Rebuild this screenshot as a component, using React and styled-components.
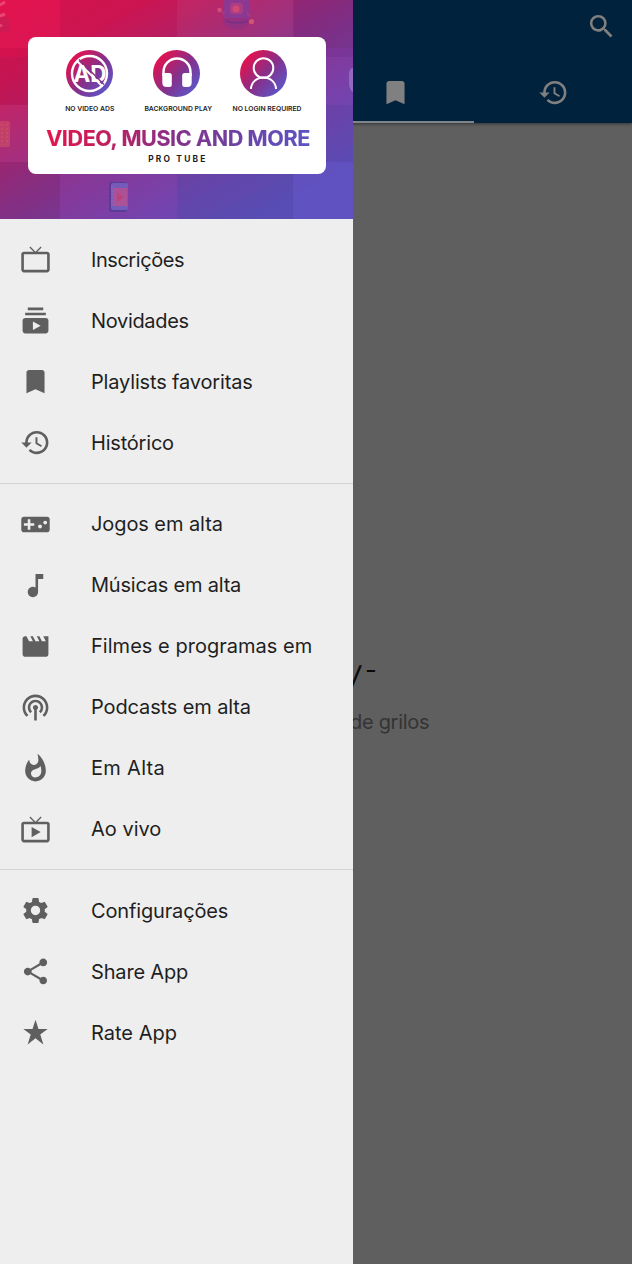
import React from "react";
import styled, { createGlobalStyle } from "styled-components";
import {
  MdSubscriptions, MdBookmark, MdHistory, MdVideogameAsset, MdMusicNote, MdMovie,
  MdPodcasts, MdWhatshot, MdLiveTv, MdSettings, MdShare, MdSearch,
} from "react-icons/md";

const GlobalStyle = createGlobalStyle`
  * { box-sizing: border-box; }
  body { margin: 0; background: #5f5f5f; font-family: Inter, "Liberation Sans", sans-serif; }
`;

const Screen = styled.div`
  position: relative;
  width: 632px;
  height: 1264px;
  overflow: hidden;
  background: #5f5f5f;
  display: flex;
  flex-direction: column;
`;

const AppBar = styled.header`
  height: 123px;
  flex: none;
  background: #00223c;
  color: #808080;
  display: flex;
  flex-direction: column;
  box-shadow: 0 1px 3px rgba(0, 0, 0, 0.45);
`;

const Toolbar = styled.div`
  height: 62px;
  padding: 11px 15px 0 0;
  display: flex;
  justify-content: flex-end;
  align-items: flex-start;
`;

const Tabs = styled.nav`
  flex: 1;
  display: grid;
  grid-template-columns: repeat(4, 1fr);
`;

const Tab = styled.div`
  display: flex;
  justify-content: center;
  align-items: center;
  border-bottom: 2px solid ${(p) => (p.$active ? "#7d858b" : "transparent")};
  padding-top: 2px;
`;

const Empty = styled.main`
  flex: 1;
  padding: 529px 0 0 350px;
  display: flex;
  flex-direction: column;
  align-items: flex-start;
  white-space: nowrap;
`;

const Shrug = styled.div`
  height: 50px;
  line-height: 50px;
  font-size: 30px;
  color: #0a0a0a;
`;

const Arm = styled.span`
  display: inline-block;
  transform: skewX(-8deg);
`;

const Hand = styled.span`
  margin-left: 3px;
  vertical-align: -4px;
`;

const EmptyText = styled.div`
  height: 40px;
  line-height: 40px;
  font-size: 20px;
  letter-spacing: -0.3px;
  color: #343434;
`;

const Drawer = styled.aside`
  position: absolute;
  inset: 0 auto 0 0;
  width: 353px;
  background: #eeeeee;
  display: flex;
  flex-direction: column;
`;

const Banner = styled.div`
  position: relative;
  height: 219px;
  flex: none;
  padding: 36.5px 27px 0 27.5px;
  overflow: hidden;
`;

const Artwork = styled.svg`
  position: absolute;
  inset: 0;
`;

const Card = styled.div`
  position: relative;
  height: 137px;
  border-radius: 8px;
  background: #fff;
  display: flex;
  flex-direction: column;
  align-items: center;
`;

const Features = styled.div`
  display: grid;
  grid-template-columns: 83px 90px 84px;
  justify-content: center;
  padding-top: 13.5px;
  width: 100%;
`;

const Feature = styled.div`
  display: flex;
  flex-direction: column;
  align-items: center;
  svg { display: block; }
`;

const FeatureLabel = styled.span`
  margin-top: 7px;
  padding-left: ${(p) => p.$indent || 0}px;
  font-size: 6.8px;
  line-height: 10px;
  font-weight: 600;
  white-space: nowrap;
  color: #1c1c1c;
`;

const Headline = styled.div`
  margin: 10px 0 0 2.5px;
  height: 28px;
  line-height: 28px;
  font-size: 21.5px;
  font-weight: 700;
  letter-spacing: -0.38px;
  white-space: nowrap;
  color: transparent;
  background: linear-gradient(100deg, #e6124d 0%, #c01f5c 22%, #83318a 50%, #6a44a6 75%, #5b55c6 100%);
  background-clip: text;
  -webkit-text-stroke: 0.2px transparent;
`;

const Tagline = styled.div`
  margin-top: 1px;
  height: 12px;
  line-height: 12px;
  font-size: 8.4px;
  font-weight: 700;
  letter-spacing: 2.2px;
  margin-right: -2.2px;
  color: #1c1c1c;
`;

const Group = styled.ul`
  margin: 0;
  padding: 10px 0 9.6px;
  list-style: none;
  & + & { border-top: 1px solid #d4d4d4; }
`;

const Item = styled.li`
  height: 61px;
  padding-left: 20px;
  display: flex;
  align-items: center;
  color: #5f5f5f;
`;

const Label = styled.span`
  margin-left: 40px;
  color: #1f1f1f;
  font-size: 20px;
  line-height: 28px;
  letter-spacing: ${(p) => p.$tracking || 0}px;
  white-space: nowrap;
`;

const TvIcon = ({ size }) => (
  <svg width={size} height={size} viewBox="0 0 24 24" fill="currentColor">
    <path d="M21 6h-7.59l3.29-3.29L16 2l-4 4-4-4-.71.71L10.59 6H3c-1.1 0-2 .89-2 2v12c0 1.1.9 2 2 2h18c1.1 0 2-.9 2-2V8c0-1.11-.9-2-2-2zm0 14H3V8h18v12z" />
  </svg>
);

const StarIcon = ({ size }) => (
  <svg width={size} height={size} viewBox="0 0 24 24" fill="currentColor">
    <path d="M12 2.2l2.3 7h7.1l-5.7 4.4 2.4 7.6-6.1-4.7-6.1 4.7 2.4-7.6-5.7-4.400h7.100z" />
  </svg>
);

const FeatureIcon = ({ id, children }) => (
  <svg width="47" height="47" viewBox="0 0 47 47" fill="none">
    <defs>
      <linearGradient id={id} x1="0.1" y1="0.2" x2="0.9" y2="0.9">
        <stop offset="0" stopColor="#e3124f" />
        <stop offset="0.5" stopColor="#86308a" />
        <stop offset="1" stopColor="#5a58cc" />
      </linearGradient>
    </defs>
    <circle cx="23.5" cy="23.5" r="23.5" fill={`url(#${id})`} />
    {children}
  </svg>
);

const tiles = [
  [0, 0, "#ff1450", 0.25], [60, 0, "#d00040", 0.12], [177, 0, "#ffffff", 0.03], [293, 0, "#301060", 0.12],
  [0, 48, "#a00040", 0.15], [60, 48, "#ffffff", 0.03], [177, 48, "#40206a", 0.1], [293, 48, "#a040e0", 0.12],
  [0, 105, "#d070c0", 0.1], [60, 105, "#501060", 0.1], [177, 105, "#ffffff", 0.02], [293, 105, "#5030a0", 0.12],
  [0, 162, "#501858", 0.1], [60, 162, "#9040c0", 0.2], [177, 162, "#4a42a8", 0.25], [293, 162, "#6454c4", 0.6],
];

const BannerArtwork = () => (
  <Artwork width="354" height="219" viewBox="0 0 354 219">
    <defs>
      <linearGradient id="sky" gradientUnits="userSpaceOnUse" x1="70" y1="-25" x2="220" y2="240">
        <stop offset="0" stopColor="#d8144f" />
        <stop offset="0.2" stopColor="#cb1955" />
        <stop offset="0.55" stopColor="#8c3186" />
        <stop offset="0.8" stopColor="#6f44a8" />
        <stop offset="1" stopColor="#5b50b8" />
      </linearGradient>
      <filter id="soft"><feGaussianBlur stdDeviation="0.6" /></filter>
    </defs>
    <rect width="354" height="219" fill="url(#sky)" />
    {tiles.map(([x, y, fill, opacity]) => (
      <rect key={`${x}-${y}`} x={x} y={y} width={x ? 117 : 60} height="57" fill={fill} opacity={opacity} />
    ))}
    <g opacity="0.65" filter="url(#soft)">
      <rect x="224" y="-4" width="25" height="25" rx="5" fill="#7a3fa5" />
      <path d="M222 18h28l-4 9q-10 4-20 0z" fill="#8b3288" />
      <path d="M226 21q10 4 22 0" stroke="#5a328a" strokeWidth="1.5" fill="none" />
      <rect x="230" y="3" width="13" height="11" rx="3" fill="#a84991" />
      <circle cx="236" cy="9" r="3.5" fill="#e45a78" />
      <path d="M219 10l6 4M250 16l-3-3" stroke="#9d4591" strokeWidth="2" />
      <circle cx="219.5" cy="10" r="2.2" fill="#e26080" />
      <circle cx="251.5" cy="21.5" r="2.6" fill="#e56a72" />
    </g>
    <g opacity="0.65" filter="url(#soft)">
      <rect x="109" y="182" width="18" height="30" rx="2" fill="#493b91" />
      <rect x="111" y="183" width="17" height="27" rx="2" fill="#6f6cc8" />
      <rect x="113" y="188" width="14" height="18" fill="#c75d92" />
      <path d="M117 192l7 5-7 5z" fill="#dc4669" />
      <path d="M112 186v21" stroke="#b97ac4" strokeDasharray="2 1.5" />
    </g>
    <g opacity="0.55" filter="url(#soft)">
      <rect x="-5" y="121" width="15" height="26" rx="1.5" fill="#ce5265" />
      <path d="M2 124v21M7 124v21" stroke="#df7b59" strokeDasharray="2 2" />
      <path d="M0 15l10 4v11l-5 3-5-2z" fill="#be2358" />
      <path d="M0 5l5-3M0 16l5-2M0 26l2-1" stroke="#f06c91" strokeWidth="3" />
      <path d="M354 67q-5 1-5 8v8q0 7 5 10z" fill="#a989d6" />
    </g>
  </Artwork>
);

const groups = [
  [
    [TvIcon, "Inscrições", -0.45],
    [MdSubscriptions, "Novidades", -0.33],
    [MdBookmark, "Playlists favoritas", -0.16],
    [MdHistory, "Histórico", -0.2],
  ],
  [
    [MdVideogameAsset, "Jogos em alta", -0.08],
    [MdMusicNote, "Músicas em alta", -0.22],
    [MdMovie, "Filmes e programas em", 0.03],
    [MdPodcasts, "Podcasts em alta", -0.12],
    [MdWhatshot, "Em Alta", 0.3],
    [MdLiveTv, "Ao vivo", 0],
  ],
  [
    [MdSettings, "Configurações", -0.15],
    [MdShare, "Share App", -0.17],
    [StarIcon, "Rate App", 0],
  ],
];

const AdText = styled.text`
  font: 700 22.5px Inter, sans-serif;
`;

export default function App() {
  return (
    <Screen>
      <GlobalStyle />
      <AppBar>
        <Toolbar><MdSearch size={31} /></Toolbar>
        <Tabs>
          <Tab />
          <Tab />
          <Tab $active><MdBookmark size={31} /></Tab>
          <Tab><MdHistory size={31} /></Tab>
        </Tabs>
      </AppBar>
      <Empty>
        <Shrug><Arm>/</Arm><Hand>¯</Hand></Shrug>
        <EmptyText>de grilos</EmptyText>
      </Empty>
      <Drawer>
        <Banner>
          <BannerArtwork />
          <Card>
            <Features>
              <Feature>
                <FeatureIcon id="ads">
                  <circle cx="23.5" cy="23.5" r="17.5" stroke="#fff" strokeWidth="2.4" />
                  <AdText x="24" y="31.8" textAnchor="middle" fill="#fff">AD</AdText>
                  <path d="M13 9.5l25 25" stroke="#83318a" strokeWidth="1.5" />
                  <path d="M11 11l25 25" stroke="#fff" strokeWidth="2" />
                </FeatureIcon>
                <FeatureLabel>NO VIDEO ADS</FeatureLabel>
              </Feature>
              <Feature>
                <FeatureIcon id="play">
                  <path d="M10.5 26v-4a13.500 13.500 0 0 1 27 0v4" stroke="#fff" strokeWidth="2.4" />
                  <path d="M9.300 23h7q2.500 0 2.500 2.500v9q0 2.500-2.500 2.500h-2.500q-4.500 0-4.500-4.500zM38.700 23h-7q-2.500 0-2.500 2.500v9q0 2.500 2.500 2.500h2.500q4.500 0 4.500-4.500z" fill="#fff" />
                </FeatureIcon>
                <FeatureLabel $indent={4}>BACKGROUND PLAY</FeatureLabel>
              </Feature>
              <Feature>
                <FeatureIcon id="login">
                  <circle cx="23.5" cy="18" r="9.8" stroke="#fff" strokeWidth="2" />
                  <path d="M11 39a12.500 11.500 0 0 1 25 0" stroke="#fff" strokeWidth="2" />
                </FeatureIcon>
                <FeatureLabel $indent={7.5}>NO LOGIN REQUIRED</FeatureLabel>
              </Feature>
            </Features>
            <Headline>VIDEO, MUSIC AND MORE</Headline>
            <Tagline>PRO TUBE</Tagline>
          </Card>
        </Banner>
        {groups.map((items, i) => (
          <Group key={i}>
            {items.map(([Icon, text, tracking]) => (
              <Item key={text}>
                <Icon size={31} />
                <Label $tracking={tracking}>{text}</Label>
              </Item>
            ))}
          </Group>
        ))}
      </Drawer>
    </Screen>
  );
}
